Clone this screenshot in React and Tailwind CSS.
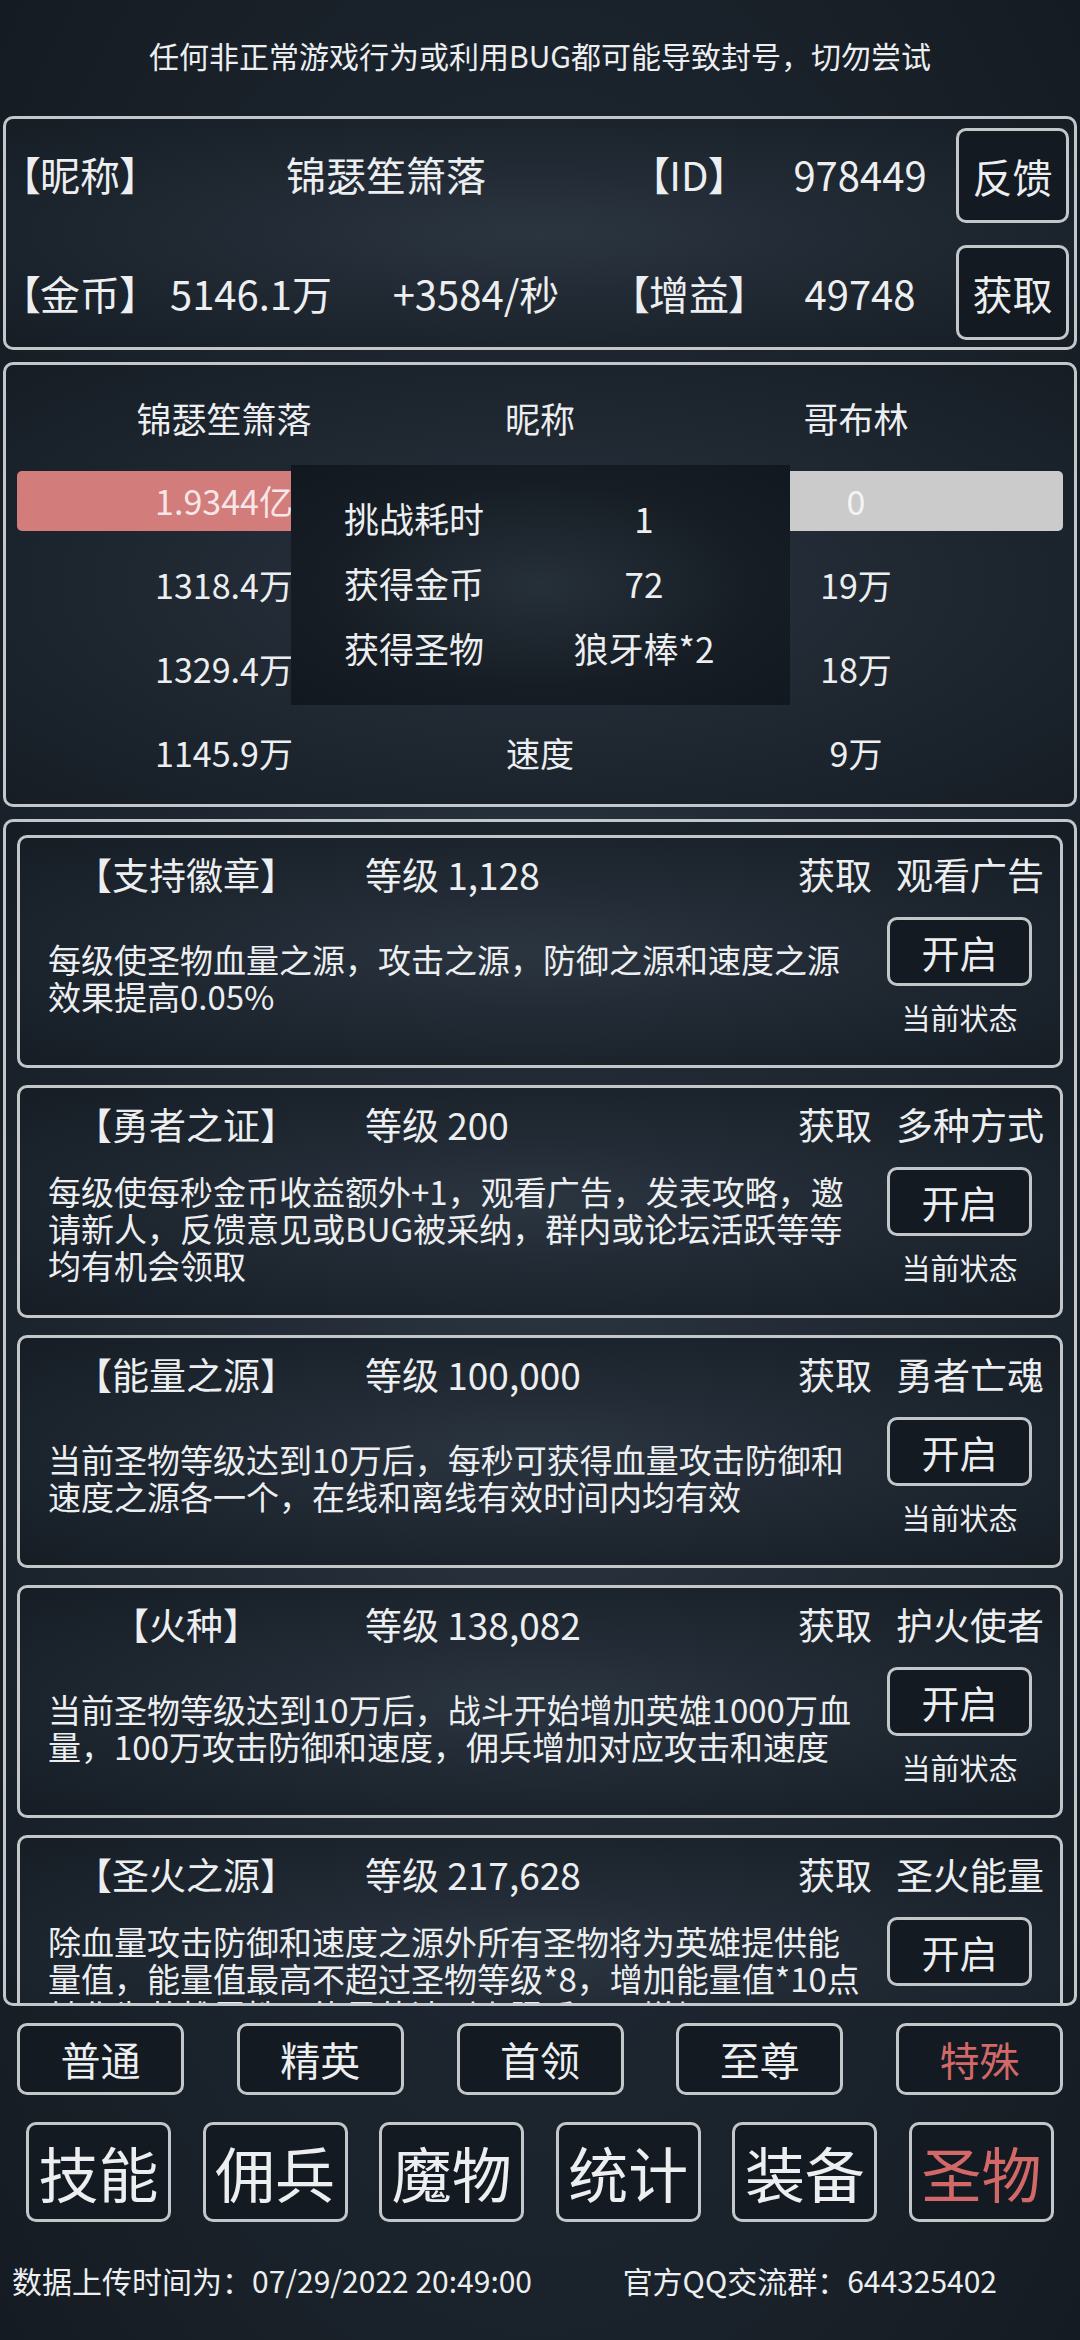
const cards = [
  {
    title: '【支持徽章】',
    level: '1,128',
    source: '观看广告',
    desc: '每级使圣物血量之源，攻击之源，防御之源和速度之源效果提高0.05%',
  },
  {
    title: '【勇者之证】',
    level: '200',
    source: '多种方式',
    desc: '每级使每秒金币收益额外+1，观看广告，发表攻略，邀请新人，反馈意见或BUG被采纳，群内或论坛活跃等等均有机会领取',
  },
  {
    title: '【能量之源】',
    level: '100,000',
    source: '勇者亡魂',
    desc: '当前圣物等级达到10万后，每秒可获得血量攻击防御和速度之源各一个，在线和离线有效时间内均有效',
  },
  {
    title: '【火种】',
    level: '138,082',
    source: '护火使者',
    desc: '当前圣物等级达到10万后，战斗开始增加英雄1000万血量，100万攻击防御和速度，佣兵增加对应攻击和速度',
  },
  {
    title: '【圣火之源】',
    level: '217,628',
    source: '圣火能量',
    desc: '除血量攻击防御和速度之源外所有圣物将为英雄提供能量值，能量值最高不超过圣物等级*8，增加能量值*10点转化为英雄属性，能量值达到上限后不再增加',
  },
]

const stats = [
  ['1.9344亿', '血量', '0'],
  ['1318.4万', '攻击', '19万'],
  ['1329.4万', '防御', '18万'],
  ['1145.9万', '速度', '9万'],
]

const tiers = ['普通', '精英', '首领', '至尊', '特殊']
const tabs = ['技能', '佣兵', '魔物', '统计', '装备', '圣物']

const panel =
  'rounded-[10px] border-[3px] border-[#c4c7ca] bg-[radial-gradient(ellipse_at_center,#2b3540_0%,#1b232c_70%,#161d25_100%)]'
const btn = 'flex items-center justify-center rounded-[10px] border-[3px] border-[#c4c7ca] bg-[#131a21]'

function Card({ title, level, source, desc }) {
  return (
    <div className={`${panel} flex h-[233px] shrink-0 flex-col`}>
      <div className="flex h-[72px] items-center text-[37px] leading-none">
        <div className="ml-[16px] w-[300px] text-center">{title}</div>
        <div className="ml-[29px] flex-1">等级 {level}</div>
        <div className="w-[74px]">获取</div>
        <div className="ml-[24px] mr-[16px] w-[148px] text-center">{source}</div>
      </div>
      <div className="flex h-[155px]">
        <div className="ml-[28px] flex w-[812px] items-center pb-[19px] text-[33px] leading-[37px]">
          <p>{desc}</p>
        </div>
        <div className="ml-auto mr-[28px] flex w-[145px] flex-col items-center pt-[7px]">
          <div className={`${btn} h-[69px] w-[145px] text-[38px] leading-none`}>开启</div>
          <div className="mt-[17px] text-[29px] leading-none">当前状态</div>
        </div>
      </div>
    </div>
  )
}

export default function App() {
  return (
    <div className="flex h-[2340px] w-[1080px] flex-col overflow-hidden bg-[radial-gradient(ellipse_at_center,#2c3640_0%,#1d2630_50%,#151b22_100%)] px-[3px] text-[#eceef0] [font-family:'Noto_Sans_CJK_SC',sans-serif]">
      <div className="flex h-[116px] items-center justify-center pb-[6px] text-[30px] leading-none">
        任何非正常游戏行为或利用BUG都可能导致封号，切勿尝试
      </div>

      {/* player info */}
      <div className={`${panel} h-[234px] pt-[9px] pl-[10px] pr-[5px]`}>
        <div className="grid grid-cols-[128px_214px_236px_190px_152px_1fr] grid-rows-[95px_95px] gap-y-[22px] text-[40px] leading-none">
          <div className="flex items-center justify-center pb-[4px] [font-feature-settings:'palt']">【昵称】</div>
          <div className="col-span-2 flex items-center justify-center pb-[4px] pl-[34px]">锦瑟笙箫落</div>
          <div className="flex items-center justify-center pb-[4px] [font-feature-settings:'palt']">【ID】</div>
          <div className="flex items-center justify-center pb-[4px]">978449</div>
          <div className="flex justify-end">
            <div className={`${btn} h-[95px] w-[113px]`}>反馈</div>
          </div>

          <div className="flex items-center justify-center [font-feature-settings:'palt']">【金币】</div>
          <div className="flex items-center justify-center">5146.1万</div>
          <div className="flex items-center justify-center">+3584/秒</div>
          <div className="flex items-center justify-center [font-feature-settings:'palt']">【增益】</div>
          <div className="flex items-center justify-center">49748</div>
          <div className="flex justify-end">
            <div className={`${btn} h-[95px] w-[113px]`}>获取</div>
          </div>
        </div>
      </div>

      {/* battle */}
      <div className={`${panel} relative mt-[12px] h-[445px] pt-[10px] pb-[9px]`}>
        <div className="mx-[11px] grid h-[84px] grid-cols-3 items-center px-[49px] text-center text-[35px] leading-none">
          <div>锦瑟笙箫落</div>
          <div>昵称</div>
          <div>哥布林</div>
        </div>
        {stats.map((row, i) => (
          <div key={i} className="flex h-[84px] items-center">
            <div
              className={`mx-[11px] grid h-[60px] flex-1 grid-cols-3 items-center rounded-[5px] px-[49px] text-center text-[34px] leading-none ${
                i === 0 ? 'bg-[linear-gradient(to_right,#d27c7c_50%,#cbcbcb_50%)] text-[#f6e6e6]' : ''
              }`}
            >
              <div>{row[0]}</div>
              <div>{row[1]}</div>
              <div className={i === 0 ? 'text-[#f4f4f4]' : ''}>{row[2]}</div>
            </div>
          </div>
        ))}

        <div className="absolute top-[100px] left-[285px] h-[240px] w-[499px] bg-[radial-gradient(ellipse_at_center,#263039_0%,#161d25_60%,#121820_100%)] pt-[20px] pl-[53px] text-[35px] leading-none">
          {[
            ['挑战耗时', '1'],
            ['获得金币', '72'],
            ['获得圣物', '狼牙棒*2'],
          ].map(([k, v]) => (
            <div key={k} className="grid h-[65px] grid-cols-[200px_200px] items-center">
              <div>{k}</div>
              <div className="text-center">{v}</div>
            </div>
          ))}
        </div>
      </div>

      {/* relics list */}
      <div className={`${panel} mt-[12px] flex h-[1187px] flex-col gap-[17px] overflow-hidden px-[11px] pt-[13px]`}>
        {cards.map((c) => (
          <Card key={c.title} {...c} />
        ))}
      </div>

      <div className="mt-[17px] flex h-[72px] justify-between px-[14px]">
        {tiers.map((t, i) => (
          <div
            key={t}
            className={`${btn} w-[167px] text-[40px] leading-none ${i === 4 ? 'text-[#d26868]' : ''}`}
          >
            {t}
          </div>
        ))}
      </div>

      <div className="mt-[27px] flex h-[100px] justify-between px-[23px]">
        {tabs.map((t, i) => (
          <div
            key={t}
            className={`${btn} w-[145px] text-[60px] leading-none ${i === 5 ? 'text-[#d26868]' : ''}`}
          >
            {t}
          </div>
        ))}
      </div>

      <div className="mt-[18px] flex h-[80px] items-center text-[30px] leading-none">
        <div className="ml-[9px]">数据上传时间为：07/29/2022 20:49:00</div>
        <div className="ml-auto mr-[80px]">官方QQ交流群：644325402</div>
      </div>
    </div>
  )
}
